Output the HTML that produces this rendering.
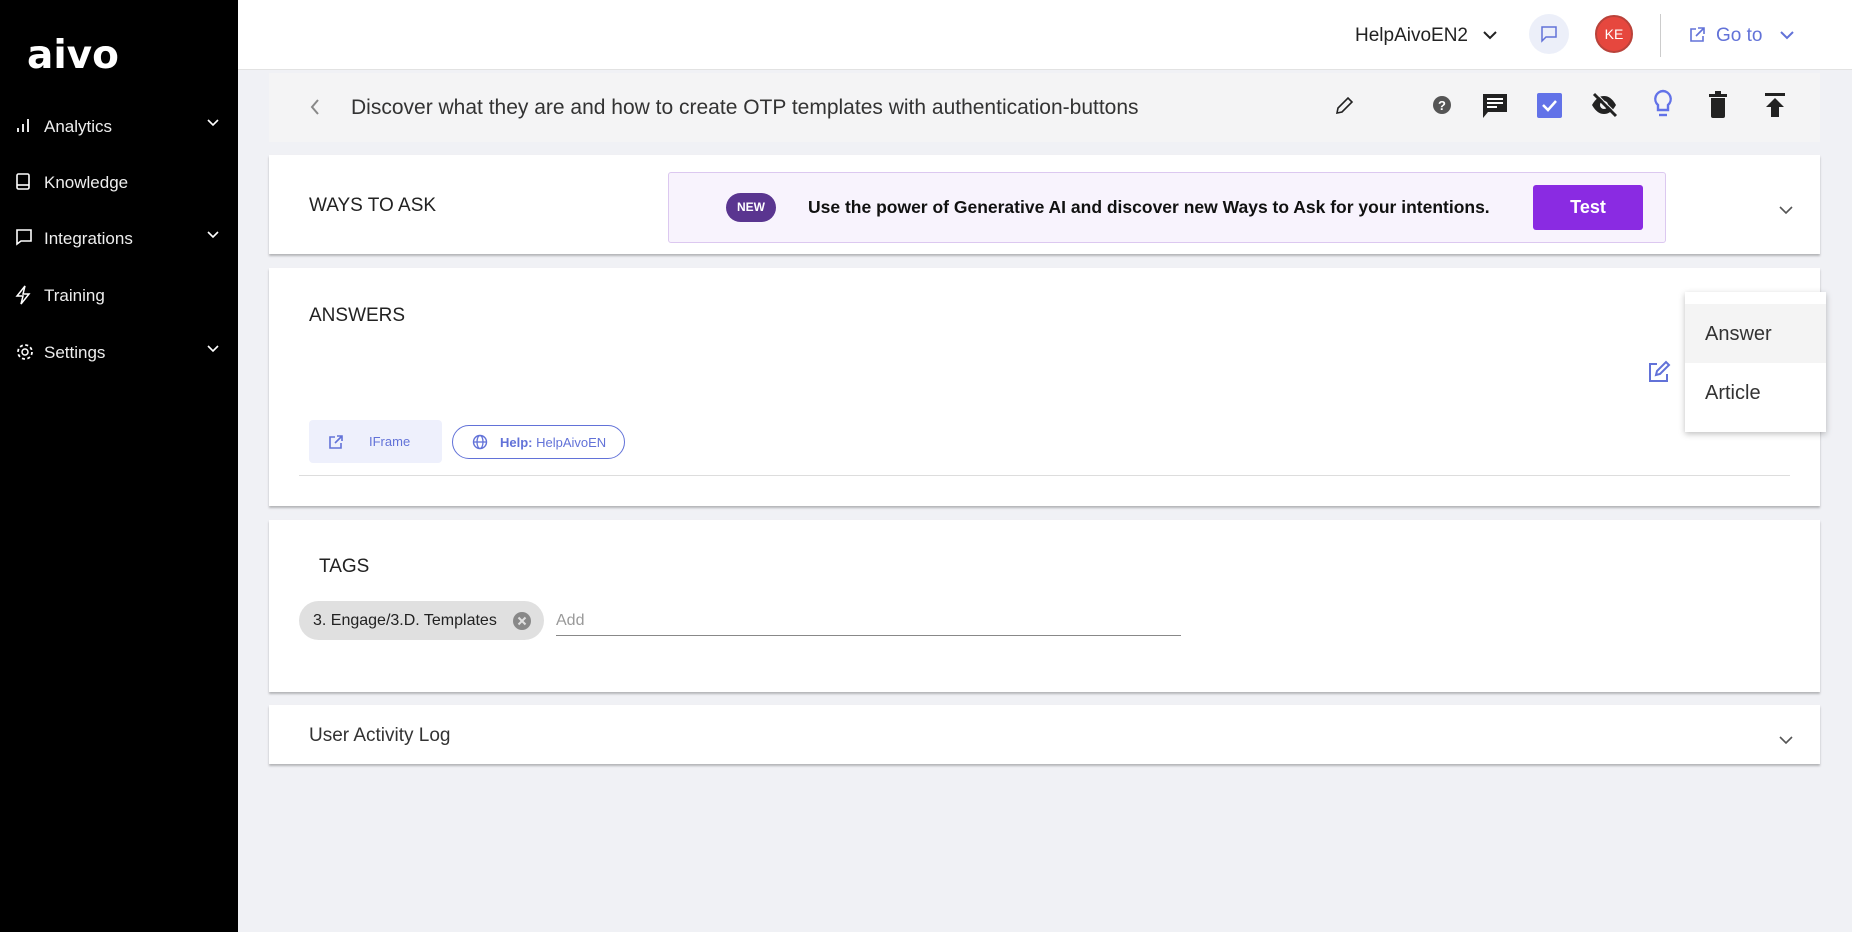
<!DOCTYPE html>
<html><head><meta charset="utf-8"><style>
*{box-sizing:border-box;margin:0;padding:0}
body{width:1852px;height:932px;overflow:hidden;background:#f0f1f5;font-family:"Liberation Sans",sans-serif;position:relative;color:#333}
.a{position:absolute}
#side{left:0;top:0;width:238px;height:932px;background:#000;color:#fff}
.ni{position:absolute;left:0;width:238px;height:30px;font-size:17px;color:#eee}
.ni svg{position:absolute;left:15px;top:5px}
.ni span{position:absolute;left:44px;top:6px}
.ni .ch{position:absolute;left:206px;top:7px}
#top{left:238px;top:0;width:1614px;height:70px;background:#fff;border-bottom:1px solid #e2e2e2}
.card{position:absolute;left:269px;width:1551px;background:#fff;box-shadow:0 2px 2px rgba(0,0,0,.25)}
.h{position:absolute;font-size:19px;color:#222}
</style></head><body>
<div id="side" class="a">
 <div class="a" style="left:27px;top:33px;font-size:39px;color:#fff;font-weight:bold;font-family:'DejaVu Sans',sans-serif;letter-spacing:0px">aivo</div>
 <div class="ni" style="top:111px"><svg width="16" height="18"><path d="M3 16v-4M8 16V8M13 16V3" stroke="#fff" stroke-width="1.8"/></svg><span>Analytics</span><svg class="ch" width="14" height="10" style="left:206px"><path d="M2 2l5 5 5-5" stroke="#fff" stroke-width="1.6" fill="none"/></svg></div>
 <div class="ni" style="top:167px"><svg width="16" height="20"><rect x="2" y="2" width="12" height="15" rx="1.5" stroke="#fff" stroke-width="1.6" fill="none"/><path d="M2 13h12" stroke="#fff" stroke-width="1.6"/></svg><span>Knowledge</span></div>
 <div class="ni" style="top:223px"><svg width="18" height="18"><path d="M2 2h14v11H6l-4 3z" stroke="#fff" stroke-width="1.6" fill="none"/></svg><span>Integrations</span><svg class="ch" width="14" height="10" style="left:206px"><path d="M2 2l5 5 5-5" stroke="#fff" stroke-width="1.6" fill="none"/></svg></div>
 <div class="ni" style="top:280px"><svg width="16" height="20"><path d="M10 1L2 11h6l-2 8 8-10H8z" stroke="#fff" stroke-width="1.5" fill="none"/></svg><span>Training</span></div>
 <div class="ni" style="top:337px"><svg width="20" height="20"><circle cx="10" cy="10" r="3" stroke="#fff" stroke-width="1.5" fill="none"/><circle cx="10" cy="10" r="7" stroke="#fff" stroke-width="1.8" stroke-dasharray="3 2.5" fill="none"/></svg><span>Settings</span><svg class="ch" width="14" height="10" style="left:206px"><path d="M2 2l5 5 5-5" stroke="#fff" stroke-width="1.6" fill="none"/></svg></div>
</div>
<div id="top" class="a">
 <div class="a" style="left:1117px;top:25px;font-size:19px;color:#222">HelpAivoEN2</div>
 <svg class="a" style="left:1244px;top:29px" width="16" height="12"><path d="M2 3l6 6 6-6" stroke="#222" stroke-width="2" fill="none"/></svg>
 <div class="a" style="left:1291px;top:14px;width:40px;height:40px;border-radius:50%;background:#eceff9"></div>
 <svg class="a" style="left:1302px;top:25px" width="18" height="18"><path d="M2 2h14v10H6l-4 4z" stroke="#6272d8" stroke-width="1.5" fill="none"/></svg>
 <div class="a" style="left:1357px;top:15px;width:38px;height:38px;border-radius:50%;background:#e6473e;border:2px solid #b9423a;color:#fff;font-size:14px;text-align:center;line-height:34px">KE</div>
 <div class="a" style="left:1422px;top:14px;width:1px;height:43px;background:#ccc"></div>
 <svg class="a" style="left:1450px;top:26px" width="18" height="18"><path d="M8 3H3v12h12v-5M10 2h6v6M16 2l-8 8" stroke="#6272d8" stroke-width="1.6" fill="none"/></svg>
 <div class="a" style="left:1478px;top:25px;font-size:19px;color:#6272d8">Go to</div>
 <svg class="a" style="left:1541px;top:30px" width="16" height="12"><path d="M2 2l6 6 6-6" stroke="#6272d8" stroke-width="2" fill="none"/></svg>
</div>
<div class="a" style="left:269px;top:73px;width:1551px;height:69px;background:#f4f4f5">
 <svg class="a" style="left:40px;top:25px" width="12" height="18"><path d="M9 2L3 9l6 7" stroke="#888" stroke-width="2" fill="none"/></svg>
 <div class="a" style="left:82px;top:23px;font-size:21px;color:#333">Discover what they are and how to create OTP templates with authentication-buttons</div>
 <svg class="a" style="left:1064px;top:22px" width="22" height="22"><path d="M4 18l1-5L15 3l4 4L9 17z" stroke="#222" stroke-width="1.6" fill="none"/></svg>
 <svg class="a" style="left:1163px;top:22px" width="20" height="20"><circle cx="10" cy="10" r="9" fill="#555"/><text x="10" y="15" font-size="13" font-weight="bold" fill="#fff" text-anchor="middle" font-family="Liberation Sans">?</text></svg>
 <svg class="a" style="left:1212px;top:19px" width="28" height="28"><path d="M2 2h24v18H7l-5 6z" fill="#222"/><path d="M6 7h16M6 11h16M6 15h10" stroke="#fff" stroke-width="2"/></svg>
 <svg class="a" style="left:1268px;top:20px" width="25" height="25"><rect width="25" height="25" rx="2" fill="#6272e8"/><path d="M6 12l5 5 8-9" stroke="#fff" stroke-width="2.5" fill="none"/></svg>
 <svg class="a" style="left:1321px;top:19px" width="28" height="26"><path d="M2 13c4-7 8-9 12-9s8 2 12 9c-4 7-8 9-12 9s-8-2-12-9z" fill="#222"/><circle cx="14" cy="13" r="4" fill="#f4f4f5"/><path d="M4 2l22 22" stroke="#222" stroke-width="3"/><path d="M4 2l22 22" stroke="#f4f4f5" stroke-width="1" transform="translate(2,-1)"/></svg>
 <svg class="a" style="left:1384px;top:16px" width="20" height="32"><path d="M10 2a8 8 0 0 0-5 14v5h10v-5a8 8 0 0 0-5-14z" stroke="#6272e8" stroke-width="2.4" fill="none"/><path d="M6 26h8" stroke="#6272e8" stroke-width="2.4"/></svg>
 <svg class="a" style="left:1439px;top:18px" width="20" height="28"><rect x="1" y="3" width="18" height="3" fill="#222"/><rect x="7" y="0" width="6" height="4" fill="#222"/><path d="M3 7h14v18a2 2 0 0 1-2 2H5a2 2 0 0 1-2-2z" fill="#222"/></svg>
 <svg class="a" style="left:1495px;top:18px" width="22" height="28"><rect x="1" y="2" width="20" height="3" fill="#222"/><path d="M11 7l9 9h-5v10H7V16H2z" fill="#222"/></svg>
</div>
<div class="card" style="top:155px;height:99px">
 <div class="h" style="left:40px;top:40px">WAYS TO ASK</div>
 <div class="a" style="left:399px;top:17px;width:998px;height:71px;background:#f8f3fd;border:1px solid #dcc8f0;border-radius:3px">
  <div class="a" style="left:57px;top:20px;width:50px;height:29px;border-radius:15px;background:#5a3590;color:#fff;font-size:12px;font-weight:bold;text-align:center;line-height:29px">NEW</div>
  <div class="a" style="left:139px;top:24px;font-size:17.5px;font-weight:bold;color:#111">Use the power of Generative AI and discover new Ways to Ask for your intentions.</div>
  <div class="a" style="left:864px;top:12px;width:110px;height:45px;background:#8a2be2;border-radius:3px;color:#fff;font-size:18px;font-weight:bold;text-align:center;line-height:45px">Test</div>
 </div>
 <svg class="a" style="left:1509px;top:50px" width="16" height="10"><path d="M2 2l6 6 6-6" stroke="#555" stroke-width="1.6" fill="none"/></svg>
</div>
<div class="card" style="top:268px;height:238px">
 <div class="h" style="left:40px;top:37px">ANSWERS</div>
 <svg class="a" style="left:1378px;top:92px" width="24" height="24"><path d="M10 4H3v17h17v-7" stroke="#6272d8" stroke-width="2" fill="none"/><path d="M9 15l1-4 9-9 3 3-9 9z" stroke="#6272d8" stroke-width="2" fill="none"/></svg>
 <div class="a" style="left:40px;top:152px;width:133px;height:43px;background:#eef0fc;border-radius:4px">
  <svg class="a" style="left:19px;top:14px" width="16" height="16"><path d="M7 3H2v11h11V9M9 2h5v5M14 2l-7 7" stroke="#6272d8" stroke-width="1.6" fill="none"/></svg>
  <div class="a" style="left:60px;top:14px;font-size:13px;color:#6272d8">IFrame</div>
 </div>
 <div class="a" style="left:183px;top:157px;width:173px;height:34px;border:1px solid #6272d8;border-radius:17px">
  <svg class="a" style="left:19px;top:8px" width="16" height="16"><circle cx="8" cy="8" r="6.5" stroke="#6272d8" stroke-width="1.4" fill="none"/><ellipse cx="8" cy="8" rx="3" ry="6.5" stroke="#6272d8" stroke-width="1.3" fill="none"/><path d="M1.5 8h13" stroke="#6272d8" stroke-width="1.3"/></svg>
  <div class="a" style="left:47px;top:9px;font-size:13px;color:#6272d8"><b>Help:</b> HelpAivoEN</div>
 </div>
 <div class="a" style="left:30px;top:207px;width:1491px;height:1px;background:#ddd"></div>
</div>
<div class="a" style="left:1685px;top:292px;width:141px;height:140px;background:#fff;box-shadow:0 2px 6px rgba(0,0,0,.25);z-index:5">
 <div class="a" style="left:0;top:12px;width:141px;height:59px;background:#f4f4f4"></div>
 <div class="a" style="left:20px;top:31px;font-size:20px;color:#333">Answer</div>
 <div class="a" style="left:20px;top:90px;font-size:20px;color:#333">Article</div>
</div>
<div class="card" style="top:520px;height:172px">
 <div class="h" style="left:50px;top:36px">TAGS</div>
 <div class="a" style="left:30px;top:81px;width:245px;height:39px;border-radius:20px;background:#e0e0e0">
  <div class="a" style="left:14px;top:11px;font-size:16px;color:#222">3. Engage/3.D. Templates</div>
  <svg class="a" style="left:214px;top:11px" width="18" height="18"><circle cx="9" cy="9" r="9" fill="#888"/><path d="M5.5 5.5l7 7M12.5 5.5l-7 7" stroke="#e0e0e0" stroke-width="2"/></svg>
 </div>
 <div class="a" style="left:287px;top:92px;font-size:16px;color:#999">Add</div>
 <div class="a" style="left:287px;top:115px;width:625px;height:1px;background:#888"></div>
</div>
<div class="card" style="top:705px;height:59px">
 <div class="a" style="left:40px;top:20px;font-size:19px;color:#333">User Activity Log</div>
 <svg class="a" style="left:1509px;top:30px" width="16" height="10"><path d="M2 2l6 6 6-6" stroke="#555" stroke-width="1.6" fill="none"/></svg>
</div>
</body></html>
